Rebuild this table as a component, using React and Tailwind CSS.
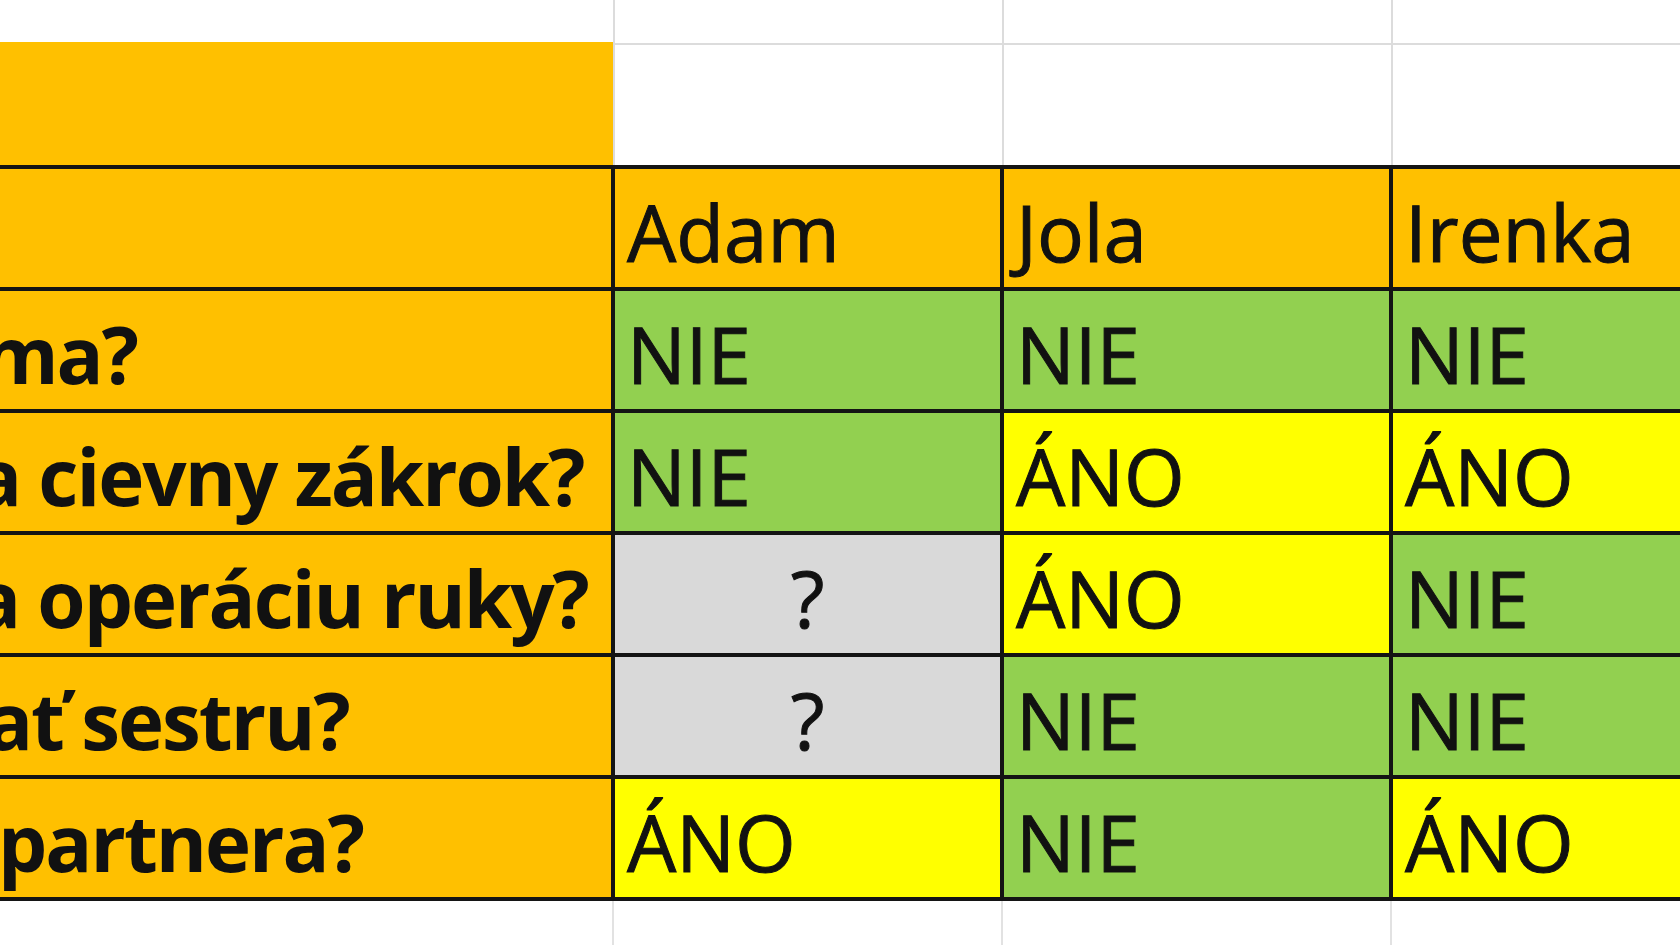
import React from 'react';

const COLORS = {
  orange: 'bg-[#ffc000]',
  green: 'bg-[#92d050]',
  yellow: 'bg-[#ffff00]',
  gray: 'bg-[#d9d9d9]',
};

const people = ['Adam', 'Jola', 'Irenka'];

// left labels are cut off by the screenshot edge, so only the visible tail is shown
const rows = [
  { label: 'ma?', shift: '-ml-[18px]', cells: [['NIE', 'green'], ['NIE', 'green'], ['NIE', 'green']] },
  { label: 'a cievny zákrok?', shift: '-ml-[25px]', cells: [['NIE', 'green'], ['ÁNO', 'yellow'], ['ÁNO', 'yellow']] },
  { label: 'a operáciu ruky?', shift: '-ml-[26px]', cells: [['?', 'gray'], ['ÁNO', 'yellow'], ['NIE', 'green']] },
  { label: 'ať sestru?', shift: '-ml-[14px]', cells: [['?', 'gray'], ['NIE', 'green'], ['NIE', 'green']] },
  { label: 'partnera?', shift: '-ml-[2px]', cells: [['ÁNO', 'yellow'], ['NIE', 'green'], ['ÁNO', 'yellow']] },
];

const widths = ['w-[389px] border-r-4', 'w-[389px] border-r-4', 'flex-1'];

const Cell = ({ value, color, className }) => (
  <div
    className={`${className} ${COLORS[color]} border-[#141414] flex items-end pb-[16px] leading-none [-webkit-text-stroke:1px_#111] ${
      value === '?' ? 'justify-center pl-0' : 'pl-[12px]'
    }`}
  >
    <span>{value}</span>
  </div>
);

export default function App() {
  return (
    <div className="w-[1680px] h-[945px] bg-white overflow-hidden flex flex-col text-[#111] text-[78px] font-['Open_Sans',sans-serif]">
      {/* sheet area above the table */}
      <div className="flex h-[165px]">
        <div className="w-[615px] flex flex-col border-r-2 border-[#dcdcdc]">
          <div className="h-[42px] bg-white" />
          <div className="flex-1 bg-[#ffc000]" />
        </div>
        {widths.map((w, i) => (
          <div
            key={i}
            className={`${i < 2 ? 'w-[389px] border-r-2' : 'flex-1'} border-[#dcdcdc] flex flex-col`}
          >
            <div className="h-[45px] border-b-2 border-[#dcdcdc]" />
            <div className="flex-1" />
          </div>
        ))}
      </div>

      <div className="h-[4px] bg-[#141414]" />

      {/* header */}
      <div className="flex h-[122px] border-b-4 border-[#141414]">
        <div className="w-[615px] border-r-4 border-[#141414] bg-[#ffc000]" />
        {people.map((p, i) => (
          <Cell key={p} value={p} color="orange" className={widths[i]} />
        ))}
      </div>

      {rows.map((r) => (
        <div key={r.label} className="flex h-[122px] border-b-4 border-[#141414]">
          <div className="w-[615px] border-r-4 border-[#141414] bg-[#ffc000] overflow-hidden flex items-end pb-[16px] leading-none font-bold tracking-[-2px]">
            <span className={`${r.shift} whitespace-nowrap`}>{r.label}</span>
          </div>
          {r.cells.map(([v, c], i) => (
            <Cell key={i} value={v} color={c} className={widths[i]} />
          ))}
        </div>
      ))}

      {/* sheet area below the table */}
      <div className="flex flex-1">
        <div className="w-[614px] border-r-2 border-[#e2e2e2]" />
        <div className="w-[389px] border-r-2 border-[#e2e2e2]" />
        <div className="w-[389px] border-r-2 border-[#e2e2e2]" />
        <div className="flex-1" />
      </div>
    </div>
  );
}
